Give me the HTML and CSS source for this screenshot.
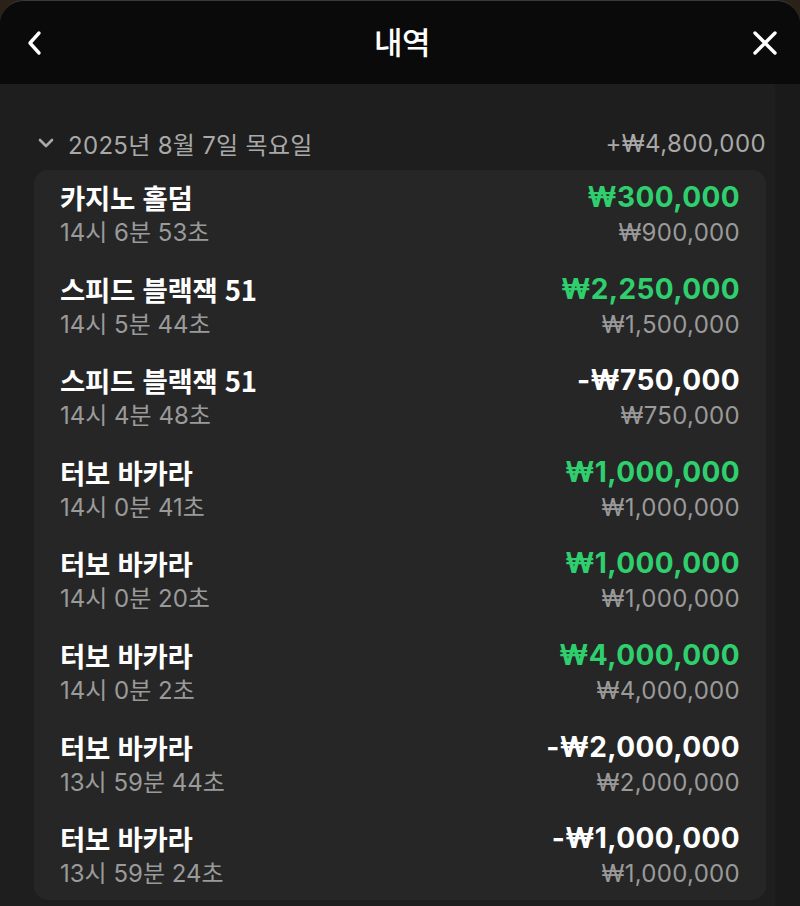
FILE: index.html
```html
<!DOCTYPE html>
<html lang="ko">
<head>
<meta charset="utf-8">
<title>내역</title>
<link rel="stylesheet" href="styles.css">
</head>
<body>
<div class="panel">
  <header class="topbar">
    <button class="icon-btn back" aria-label="뒤로">
      <svg width="16" height="26" viewBox="0 0 16 26"><path d="M13 3 L4 13 L13 23" fill="none" stroke="#fff" stroke-width="3.4" stroke-linecap="round" stroke-linejoin="round"/></svg>
    </button>
    <h1 class="title">내역</h1>
    <button class="icon-btn close" aria-label="닫기">
      <svg width="26" height="26" viewBox="0 0 26 26"><path d="M3 3 L23 23 M23 3 L3 23" fill="none" stroke="#fff" stroke-width="3.4" stroke-linecap="round"/></svg>
    </button>
  </header>
  <main class="content">
    <div class="day-head">
      <div class="day-left">
        <svg class="chev" width="16" height="10" viewBox="0 0 16 10"><path d="M2 2 L8 8 L14 2" fill="none" stroke="#a8a8a8" stroke-width="2.6" stroke-linecap="round" stroke-linejoin="round"/></svg>
        <span>2025년 8월 7일 목요일</span>
      </div>
      <span class="day-total">+₩4,800,000</span>
    </div>
    <section class="card">
      <div class="row">
        <div class="left"><div class="name">카지노 홀덤</div><div class="time">14시 6분 53초</div></div>
        <div class="right"><div class="amt win">₩300,000</div><div class="bet">₩900,000</div></div>
      </div>
      <div class="row">
        <div class="left"><div class="name">스피드 블랙잭 51</div><div class="time">14시 5분 44초</div></div>
        <div class="right"><div class="amt win">₩2,250,000</div><div class="bet">₩1,500,000</div></div>
      </div>
      <div class="row">
        <div class="left"><div class="name">스피드 블랙잭 51</div><div class="time">14시 4분 48초</div></div>
        <div class="right"><div class="amt">-₩750,000</div><div class="bet">₩750,000</div></div>
      </div>
      <div class="row">
        <div class="left"><div class="name">터보 바카라</div><div class="time">14시 0분 41초</div></div>
        <div class="right"><div class="amt win">₩1,000,000</div><div class="bet">₩1,000,000</div></div>
      </div>
      <div class="row">
        <div class="left"><div class="name">터보 바카라</div><div class="time">14시 0분 20초</div></div>
        <div class="right"><div class="amt win">₩1,000,000</div><div class="bet">₩1,000,000</div></div>
      </div>
      <div class="row">
        <div class="left"><div class="name">터보 바카라</div><div class="time">14시 0분 2초</div></div>
        <div class="right"><div class="amt win">₩4,000,000</div><div class="bet">₩4,000,000</div></div>
      </div>
      <div class="row">
        <div class="left"><div class="name">터보 바카라</div><div class="time">13시 59분 44초</div></div>
        <div class="right"><div class="amt">-₩2,000,000</div><div class="bet">₩2,000,000</div></div>
      </div>
      <div class="row">
        <div class="left"><div class="name">터보 바카라</div><div class="time">13시 59분 24초</div></div>
        <div class="right"><div class="amt">-₩1,000,000</div><div class="bet">₩1,000,000</div></div>
      </div>
    </section>
    <div class="scroll-track"></div>
  </main>
</div>
</body>
</html>
```
FILE: styles.css
```css
* { box-sizing: border-box; }
html, body {
  margin: 0;
  padding: 0;
  background: #2a2119;
  height: 906px;
  overflow: hidden;
}
body {
  font-family: "Inter", "Noto Sans CJK KR", sans-serif;
  color: #fff;
}
.panel {
  height: 906px;
  border-radius: 24px 24px 0 0;
  overflow: hidden;
  background: #1e1e1e;
  border-top: 1px solid #3a3a3a;
  display: flex;
  flex-direction: column;
}
.topbar {
  height: 83px;
  flex: none;
  background: #0a0a0a;
  display: flex;
  align-items: center;
  justify-content: space-between;
  padding: 0 22px 0 26px;
}
.icon-btn {
  background: none;
  border: 0;
  padding: 0;
  display: flex;
  align-items: center;
  justify-content: center;
  width: 26px;
  height: 40px;
}
.back { justify-content: flex-start; }
.title {
  margin: 0;
  font-family: "Noto Sans CJK KR", sans-serif;
  font-size: 31px;
  font-weight: 500;
  line-height: 40px;
  letter-spacing: -0.5px;
  margin-top: -4px;
}
.content {
  position: relative;
  flex: 1;
  padding: 44px 34px 0 34px;
}
.day-head {
  display: flex;
  justify-content: space-between;
  align-items: center;
  height: 30px;
  color: #a8a8a8;
  font-size: 24px;
  margin-bottom: 12px;
}
.day-left {
  display: flex;
  align-items: center;
  gap: 14px;
  padding-left: 4px;
}
.day-left span { letter-spacing: 0.3px; }
.day-total { letter-spacing: 0.4px; }
.card {
  position: relative;
  background: #262626;
  border-radius: 14px;
  padding: 12px 26px 0 26px;
  height: 730px;
}
.row {
  display: flex;
  justify-content: space-between;
  height: 91.6px;
}
.left, .right { display: flex; flex-direction: column; }
.right { align-items: flex-end; }
.name {
  font-family: "Noto Sans CJK KR", sans-serif;
  font-size: 27.5px;
  font-weight: 700;
  line-height: 30px;
  letter-spacing: -0.3px;
}
.time, .bet {
  font-size: 24px;
  line-height: 28px;
  margin-top: 7px;
  color: #9a9a9a;
}
.bet { letter-spacing: 0.3px; }
.amt {
  font-size: 28px;
  font-weight: 700;
  line-height: 30px;
  letter-spacing: 0.4px;
  color: #ffffff;
}
.amt.win { color: #2fcf6e; }
.scroll-track {
  position: absolute;
  top: 0;
  right: 0;
  width: 25px;
  height: 100%;
  background: rgba(0,0,0,0.12);
}
```
